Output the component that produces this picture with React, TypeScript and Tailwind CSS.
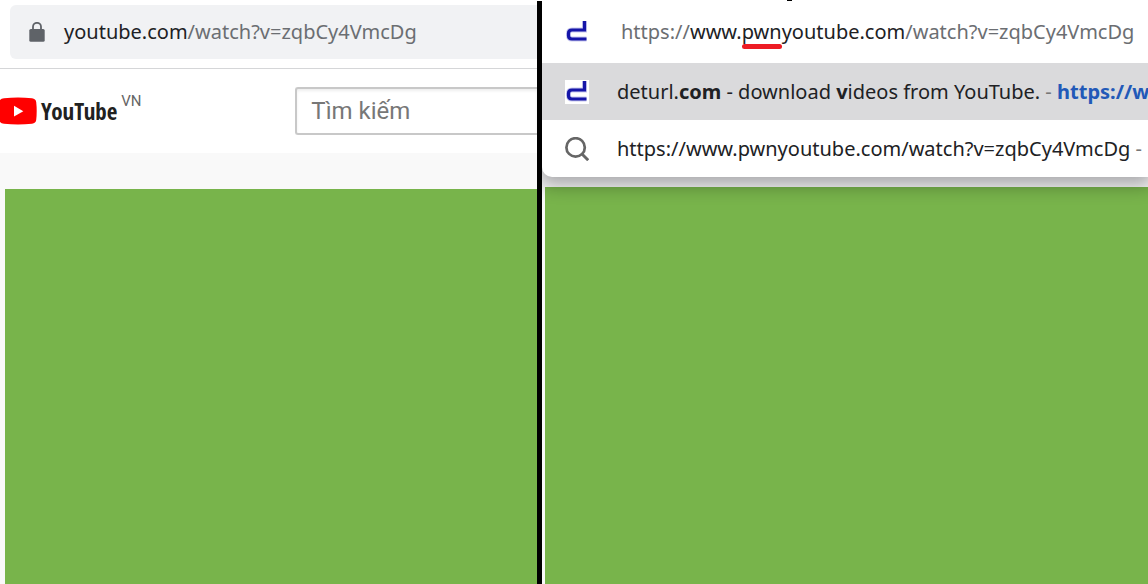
import React from 'react';

const DeturlIcon: React.FC = () => (
  <svg width="24" height="24" viewBox="0 0 24 24" fill="none" className="shrink-0 bg-white" aria-hidden="true">
    <path d="M19.5 1V10H7Q3.5 10 3.5 13.5V15.5Q3.5 19 7 19H21.5" stroke="#c9c9ef" strokeWidth="5" />
    <path d="M19.5 1V10H7Q3.5 10 3.5 13.5V15.5Q3.5 19 7 19H21.5" stroke="#1515a8" strokeWidth="3.2" />
  </svg>
);

const LockIcon: React.FC = () => (
  <svg width="16" height="20" viewBox="0 0 16 20" className="shrink-0" aria-hidden="true">
    <rect x="0.3" y="7" width="15.4" height="12.8" rx="1.6" fill="#5f6368" />
    <path d="M4 8V4.8a4 4 0 0 1 8 0V8" fill="none" stroke="#5f6368" strokeWidth="1.8" />
  </svg>
);

const SearchIcon: React.FC = () => (
  <svg width="24" height="24" viewBox="0 0 24 24" fill="none" className="shrink-0" aria-hidden="true">
    <circle cx="10.6" cy="10.4" r="9.2" stroke="#666" strokeWidth="2.7" />
    <path d="M17 17l6.2 6.2" stroke="#666" strokeWidth="2.9" />
  </svg>
);

const YouTubeLogo: React.FC = () => (
  <a href="#home" className="flex items-center gap-1" aria-label="YouTube VN">
    <svg width="37" height="28" viewBox="0 0 37 28" aria-hidden="true">
      <path
        d="M-1 5Q0 1.6 4 1.2Q18-.3 32 1.2Q35.8 1.7 36.2 5Q37.2 14 36.2 23Q35.8 26.3 32 26.7Q18 28.2 4 26.7Q0 26.3-1 23Z"
        fill="#f00"
      />
      <path d="M14 8.8v10.8l9.3-5.4z" fill="#fff" />
    </svg>
    <span className="font-['Open_Sans_Condensed','Liberation_Sans_Narrow','Roboto_Condensed',sans-serif] text-[23px] leading-7 font-bold text-[#212121]">
      YouTube
    </span>
    <span className="mb-5 font-['Roboto',sans-serif] text-[15px] leading-4 text-[#666]">VN</span>
  </a>
);

const YouTubePane: React.FC = () => (
  <section className="flex min-w-0 flex-col overflow-hidden bg-[#f9f9f9]">
    <div className="border-b border-[#d5d6d8] bg-white pt-[5px] pb-[9px] pl-[10px]">
      <div className="flex h-[54px] items-center gap-[19px] rounded-l-md bg-[#f1f2f4] pl-[19px]">
        <LockIcon />
        <p className="text-xl whitespace-nowrap text-[#6b6e72]">
          <span className="text-[#202124]">youtube.com</span>/watch?v=zqbCy4VmcDg
        </p>
      </div>
    </div>
    <header className="flex h-[84px] items-center justify-between gap-4 bg-white">
      <YouTubeLogo />
      <input
        type="search"
        aria-label="Tìm kiếm"
        placeholder="Tìm kiếm"
        className="h-12 w-[45%] min-w-0 rounded-l-[3px] border-2 border-r-0 border-[#c8c8c8] bg-white pl-[14px] font-['Roboto',sans-serif] text-2xl text-[#333] shadow-[inset_0_2px_3px_#eee] outline-none placeholder:text-[#777]"
      />
    </header>
    <main className="mt-9 ml-[5px] flex-1 bg-[#78b44b]" />
  </section>
);

const PwnPane: React.FC = () => (
  <section className="relative flex min-w-0 flex-col overflow-hidden bg-[#f9f9f9]">
    <div className="absolute top-0 left-[245px] z-10 h-px w-[5px] bg-black" />
    <div className="relative rounded-bl-[10px] bg-white text-xl whitespace-nowrap text-[#202124] shadow-[0_5px_18px_4px_rgba(0,0,10,0.32)]">
      <div className="flex h-[63px] items-center gap-8 pl-[23px]">
        <DeturlIcon />
        <p className="text-[#6b6e72]">
          https://
          <span className="text-[#202124]">
            www.
            <span className="relative">
              pwn
              <span className="absolute inset-x-0 -bottom-1 h-[5px] rounded-full bg-[#ed1c24]" />
            </span>
            youtube.com
          </span>
          /watch?v=zqbCy4VmcDg
        </p>
      </div>
      <button type="button" className="flex h-[57px] w-full items-center gap-7 overflow-hidden bg-[#dadadc] pl-[23px]">
        <DeturlIcon />
        <span>
          deturl.<b>com</b> - download <b>v</b>ideos from YouTube.
          <span className="text-[#777]"> - </span>
          <b className="text-[#2259b8]">https://www.pwnyoutube.com</b>
        </span>
      </button>
      <button type="button" className="flex h-[57px] w-full items-center gap-7 overflow-hidden rounded-bl-[10px] pl-[23px]">
        <SearchIcon />
        <span>
          https://www.pwnyoutube.com/watch?v=zqbCy4VmcDg
          <span className="text-[#777]"> -</span>
        </span>
      </button>
    </div>
    <main className="mt-[10px] ml-[3px] flex-1 bg-[#78b44b]" />
  </section>
);

const App: React.FC = () => {
  return (
    <div className="grid min-h-screen grid-cols-[537fr_5px_606fr] bg-white font-['Segoe_UI','Noto_Sans',sans-serif]">
      <YouTubePane />
      <div className="mt-px bg-black" />
      <PwnPane />
    </div>
  );
};

export default App;
